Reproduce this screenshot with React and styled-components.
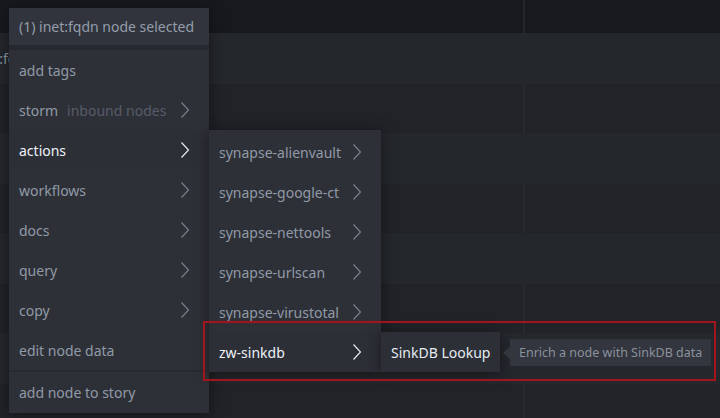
import styled, { createGlobalStyle } from "styled-components";

const GlobalStyle = createGlobalStyle`
  html, body {
    margin: 0;
    padding: 0;
    background: #17191d;
  }
  body {
    font-family: "Noto Sans", "Open Sans", sans-serif;
    font-size: 14px;
  }
`;

const rows = [
  { light: true, text: "inet:fqdn" },
  { light: false },
  { light: true },
  { light: false },
  { light: true },
  { light: false },
  { light: true },
  { light: false },
];

const mainItems = [
  { label: "add tags" },
  { label: "storm", hint: "inbound nodes", sub: true },
  { label: "actions", sub: true, active: true },
  { label: "workflows", sub: true },
  { label: "docs", sub: true },
  { label: "query", sub: true },
  { label: "copy", sub: true },
  { label: "edit node data" },
];

const actionItems = [
  { label: "synapse-alienvault" },
  { label: "synapse-google-ct" },
  { label: "synapse-nettools" },
  { label: "synapse-urlscan" },
  { label: "synapse-virustotal" },
  { label: "zw-sinkdb", active: true },
];

function Chevron() {
  return (
    <svg width="10" height="18" viewBox="0 0 10 18" fill="none">
      <path d="M1.5 1.5 L8.5 9 L1.5 16.5" stroke="currentColor" strokeWidth="1.1" />
    </svg>
  );
}

function App() {
  return (
    <>
      <GlobalStyle />
      <Page>
        <Table>
          <HeadBand>
            <HeadCell $w={523} />
            <HeadCell />
          </HeadBand>
          {rows.map((r, i) => (
            <Row key={i} $light={r.light}>
              <Cell $w={523} $light={r.light}>
                {r.text && <CutText>{r.text}</CutText>}
              </Cell>
              <Cell $light={r.light} />
            </Row>
          ))}
        </Table>

        <MainMenu>
          <MenuHeader>(1) inet:fqdn node selected</MenuHeader>
          <HeaderGap />
          {mainItems.map((it) => (
            <Item key={it.label} $active={it.active}>
              <Label>
                {it.label}
                {it.hint && <Hint>{it.hint}</Hint>}
              </Label>
              {it.sub && (
                <Arrow $active={it.active}>
                  <Chevron />
                </Arrow>
              )}
            </Item>
          ))}
          <Divider />
          <Item>
            <Label>add node to story</Label>
          </Item>
        </MainMenu>

        <SubMenu>
          {actionItems.map((it) => (
            <Item key={it.label} $active={it.active}>
              <Label>{it.label}</Label>
              <Arrow $active={it.active}>
                <Chevron />
              </Arrow>
            </Item>
          ))}
        </SubMenu>

        <LeafMenu>
          <LeafItem>SinkDB Lookup</LeafItem>
        </LeafMenu>

        <Tooltip>Enrich a node with SinkDB data</Tooltip>

        <Highlight />
      </Page>
    </>
  );
}

const Page = styled.div`
  position: relative;
  width: 720px;
  height: 418px;
  overflow: hidden;
  background: #17191d;
`;

const Table = styled.div`
  display: flex;
  flex-direction: column;
`;

const HeadBand = styled.div`
  display: flex;
  height: 33px;
  background: #17191a;
`;

const HeadCell = styled.div`
  flex: ${(p) => (p.$w ? `0 0 ${p.$w}px` : "1")};
  background: #17191d;
  border-right: ${(p) => (p.$w ? "2px solid #23262b" : "none")};
`;

const Row = styled.div`
  display: flex;
  height: ${(p) => (p.$light ? 51 : 49)}px;
  background: ${(p) => (p.$light ? "#24272c" : "#212328")};
`;

const Cell = styled.div`
  flex: ${(p) => (p.$w ? `0 0 ${p.$w}px` : "1")};
  display: flex;
  align-items: center;
  overflow: hidden;
  border-right: ${(p) =>
    p.$w ? `2px solid ${p.$light ? "#24272c" : "#26292e"}` : "none"};
`;

const CutText = styled.span`
  margin-left: -26px;
  color: #8d96a3;
  white-space: nowrap;
`;

const Menu = styled.div`
  position: absolute;
  display: flex;
  flex-direction: column;
  background: #2e3038;
  box-shadow: 0 2px 14px rgba(0, 0, 0, 0.45);
`;

const MainMenu = styled(Menu)`
  left: 9px;
  top: 8px;
  width: 200px;
  padding-bottom: 1px;
`;

const SubMenu = styled(Menu)`
  left: 209px;
  top: 130px;
  width: 172px;
  padding-top: 2px;
`;

const LeafMenu = styled(Menu)`
  left: 381px;
  top: 332px;
  width: 119px;
  background: #2c2f36;
`;

const MenuHeader = styled.div`
  height: 37px;
  display: flex;
  align-items: center;
  padding: 0 10px;
  background: #31343c;
  color: #949dab;
  white-space: nowrap;
`;

const HeaderGap = styled.div`
  height: 5px;
  background: #26292f;
`;

const Divider = styled.div`
  height: 2px;
  background: #272a30;
`;

const Item = styled.div`
  height: 40px;
  display: flex;
  align-items: center;
  justify-content: space-between;
  padding: 0 19px 0 10px;
  color: ${(p) => (p.$active ? "#eef2f7" : "#909aa7")};
  background: ${(p) => (p.$active ? "#2d2f37" : "transparent")};
  white-space: nowrap;
`;

const Label = styled.span`
  display: flex;
  align-items: center;
  gap: 9px;
`;

const Hint = styled.span`
  color: #565c67;
`;

const Arrow = styled.span`
  display: flex;
  color: ${(p) => (p.$active ? "#eef2f7" : "#7b828e")};
`;

const LeafItem = styled.div`
  height: 40px;
  display: flex;
  align-items: center;
  padding: 0 10px;
  color: #e6ebf2;
  white-space: nowrap;
`;

const Tooltip = styled.div`
  position: absolute;
  left: 510px;
  top: 339px;
  height: 27px;
  display: flex;
  align-items: center;
  padding: 0 9px;
  background: #33363e;
  color: #8a919c;
  font-size: 12.5px;
  white-space: nowrap;

  &::before {
    content: "";
    position: absolute;
    left: -7px;
    top: 50%;
    margin-top: -6px;
    border-style: solid;
    border-width: 6px 7px 6px 0;
    border-color: transparent #33363e transparent transparent;
  }
`;

const Highlight = styled.div`
  position: absolute;
  left: 203px;
  top: 321px;
  width: 509px;
  height: 56px;
  border: 2px solid #a3151c;
  pointer-events: none;
  z-index: 5;
`;

export default App;
